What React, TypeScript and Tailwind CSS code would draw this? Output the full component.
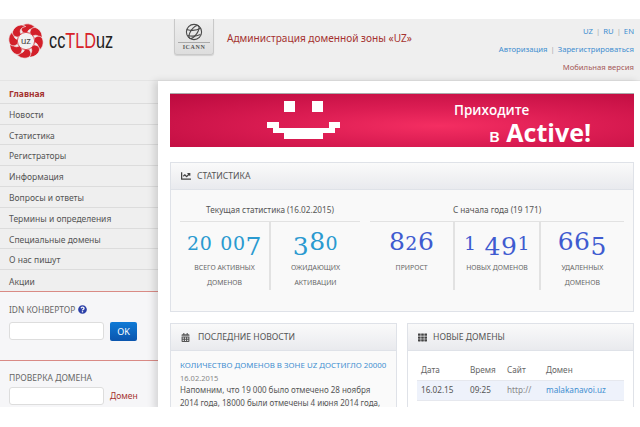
import { FaCalendarAlt, FaChartLine, FaQuestionCircle, FaTh } from 'react-icons/fa';

const menu = [
  'Главная',
  'Новости',
  'Статистика',
  'Регистраторы',
  'Информация',
  'Вопросы и ответы',
  'Термины и определения',
  'Специальные домены',
  'О нас пишут',
  'Акции',
];

// the numbers on the page are old-style figures, no installed font has them
const Figures = ({ value, color }: { value: string; color: string }) => (
  <div className={`mt-[5px] h-[30px] flex items-baseline justify-center tracking-[0.5px] font-['DejaVu_Serif',serif] ${color}`}>
    {value.split('').map((ch, i) => {
      if (ch === ' ') return <span key={i} className="w-[8px]">&nbsp;</span>;
      if ('012'.includes(ch)) return <span key={i} className="text-[19px] leading-[30px]">{ch}</span>;
      if ('68'.includes(ch)) return <span key={i} className="text-[25px] leading-[30px]">{ch}</span>;
      return <span key={i} className="text-[25px] leading-[30px] relative top-[5px]">{ch}</span>;
    })}
  </div>
);

const Stat = ({ value, color, label, border }: { value: string; color: string; label: string[]; border?: boolean }) => (
  <div className={`h-[68px] flex-1 ${border ? 'border-l-2 border-[#e2e2e2]' : ''}`}>
    <Figures value={value} color={color} />
    <div className="mt-[3px] text-center text-[6.9px] leading-[15px] text-[#666]">
      {label.map((l) => (
        <div key={l}>{l}</div>
      ))}
    </div>
  </div>
);

const Logo = () => (
  <svg width="36" height="36" viewBox="0 0 36 36">
    {[0, 45, 90, 135, 180, 225, 270, 315].map((a) => (
      <path
        key={a}
        d="M15 9.5 C11.5 6 13 1 19 0.8 C24 0.8 27.5 3.5 28 7.5 C24.5 5 20.5 5.5 19.5 9.5 Z"
        fill="#d3202a"
        stroke="#f0f0f0"
        strokeWidth="0.7"
        transform={`rotate(${a} 18 18)`}
      />
    ))}
    <circle cx="18" cy="18" r="8.6" fill="#f2f2f2" stroke="#d3202a" strokeWidth="0.8" />
    <text x="18" y="21" textAnchor="middle" fontSize="9.5" fontFamily="Liberation Sans, sans-serif" fill="#444">
      uz
    </text>
  </svg>
);

const Icann = () => (
  <div className="w-[40px] h-[36px] rounded-b-[3px] border border-t-0 border-[#c9c9c9] bg-gradient-to-b from-[#eeeeee] to-[#dedede] flex flex-col items-center shadow-[0_1px_1px_rgba(0,0,0,0.12)]">
    <svg width="18" height="18" viewBox="0 0 18 18" className="mt-[4px]" fill="none" stroke="#4a4a4a" strokeWidth="1.1">
      <circle cx="9" cy="9" r="7.6" />
      <ellipse cx="9" cy="9" rx="3.2" ry="7.6" transform="rotate(35 9 9)" />
      <path d="M1.8 6.5 C7 8 12 7.5 16 5" />
      <path d="M2.5 12.5 C7 13.5 12 13 15.5 11.5" />
    </svg>
    <div className="mt-[1px] w-[32px] h-px bg-[#aaa]" />
    <div className="mt-[1px] text-[6px] leading-[7px] font-bold tracking-[0.6px] text-[#555] font-['Liberation_Serif',serif]">ICANN</div>
  </div>
);

const Smile = () => (
  <svg width="73" height="39" viewBox="0 0 73 39" fill="#fff" className="shrink-0">
    <rect x="17" y="0" width="11" height="11" />
    <rect x="45" y="0" width="11" height="11" />
    <rect x="0" y="21" width="12" height="6" />
    <rect x="62" y="21" width="11" height="6" />
    <rect x="6" y="27" width="62" height="5" />
    <rect x="17" y="32" width="39" height="6" />
  </svg>
);

const CardHead = ({ icon, title }: { icon: React.ReactNode; title: string }) => (
  <div className="h-[27px] flex items-center gap-[6px] px-[10px] border-b border-[#dfe2e8] bg-gradient-to-b from-[#fafafa] to-[#e9eaee] text-[8.6px] text-[#555] uppercase">
    {icon}
    <span>{title}</span>
  </div>
);

export default function App() {
  return (
    <div className="w-[640px] h-[427px] overflow-hidden bg-white pt-[19px] font-['Noto_Sans',sans-serif]">
      <div className="h-[388px] overflow-hidden bg-[#efefef]">
        {/* header */}
        <div className="h-[62px] flex items-start border-b border-[#e4e4e4]">
          <div className="w-[174px] flex items-center pl-[8px] pt-[4px]">
            <Logo />
            <div className="ml-[5px] text-[22px] leading-[36px] origin-left scale-x-[0.74] whitespace-nowrap font-['Liberation_Sans',sans-serif] text-[#222]">
              cc<span className="text-[#d8222a]">TLD</span>uz
            </div>
          </div>
          <Icann />
          <div className="ml-[13px] mt-[12px] text-[10.1px] leading-[15px] text-[#a5322f] whitespace-nowrap">
            Администрация доменной зоны «UZ»
          </div>
          <div className="ml-auto pr-[6px] pt-[3px] text-[7.7px] leading-[18px] text-right text-[#3e8ed0] whitespace-nowrap">
            <div>
              UZ <span className="mx-[1px] text-[#aaa]">|</span> RU <span className="mx-[1px] text-[#aaa]">|</span> EN
            </div>
            <div>
              Авторизация <span className="mx-[1px] text-[#aaa]">|</span> Зарегистрироваться
            </div>
            <div className="text-[#a55a5a]">Мобильная версия</div>
          </div>
        </div>

        <div className="flex">
          {/* sidebar */}
          <div className="w-[158px] shrink-0">
            <ul className="border-b border-[#d98a85] pt-[2px]">
              {menu.map((m, i) => (
                <li
                  key={m}
                  className={`h-[20.8px] flex items-center pl-[9px] pt-[3px] text-[8.5px] border-b border-[#dcdcdc] last:border-b-0 ${
                    i === 0 ? 'font-bold text-[#a5322f]' : 'text-[#555]'
                  }`}
                >
                  {m}
                </li>
              ))}
            </ul>
            <div className="h-[69px] bg-[#f6f6f8] border-b border-[#d98a85] pl-[9px] pt-[12px]">
              <div className="flex items-center gap-[3px] text-[8.4px] leading-[12px] text-[#666]">
                IDN КОНВЕРТОР <FaQuestionCircle className="text-[#2b3fa8] text-[9px]" />
              </div>
              <div className="mt-[6px] flex items-center gap-[6px]">
                <div className="w-[95px] h-[18px] bg-white border border-[#ddd] rounded-[3px]" />
                <div className="w-[27px] h-[19px] rounded-[2px] bg-gradient-to-b from-[#0f7ad6] to-[#0b55ae] text-white text-[9px] flex items-center justify-center">
                  OK
                </div>
              </div>
            </div>
            <div className="h-[60px] bg-[#f6f6f8] pl-[9px] pt-[11px]">
              <div className="text-[8.5px] leading-[12px] text-[#666]">ПРОВЕРКА ДОМЕНА</div>
              <div className="mt-[3px] flex items-center gap-[6px]">
                <div className="w-[95px] h-[18px] bg-white border border-[#ddd] rounded-[3px]" />
                <span className="text-[8.5px] text-[#a5322f]">Домен</span>
              </div>
            </div>
          </div>

          {/* main */}
          <div className="flex-1 h-[330px] bg-white pl-[12px] pr-[6px] pt-[12px] shadow-[-4px_0_7px_rgba(0,0,0,0.13)]">
            <div className="h-[54px] border-t border-[#aaa] flex items-start pl-[97px] pt-[7px] bg-[radial-gradient(ellipse_at_58%_60%,#f42e62_0%,#dc1d53_40%,#bb0a3e_100%)]">
              <Smile />
              <div className="ml-[114px] text-white font-['Open_Sans',sans-serif] whitespace-nowrap">
                <div className="-mt-[1px] text-[13.5px] leading-[20px] font-semibold">Приходите</div>
                <div className="ml-[35px] -mt-[2px] text-[25px] leading-[28px] font-bold">
                  <span className="text-[18px] font-semibold">в</span> Active!
                </div>
              </div>
            </div>

            <div className="mt-[15px] h-[150px] border border-[#dfe2e8] bg-[#f9f9f9]">
              <CardHead icon={<FaChartLine className="text-[#444] text-[10px]" />} title="Статистика" />
              <div className="flex px-[9px] pt-[13px] gap-[10px]">
                <div className="w-[180px]">
                  <div className="h-[19px] border-b border-[#e2e2e2] text-center text-[8.2px] leading-[13px] text-[#555]">
                    Текущая статистика (16.02.2015)
                  </div>
                  <div className="flex">
                    <Stat value="20 007" color="text-[#2a9ad0]" label={['ВСЕГО АКТИВНЫХ', 'ДОМЕНОВ']} />
                    <Stat value="380" color="text-[#2a9ad0]" label={['ОЖИДАЮЩИХ', 'АКТИВАЦИИ']} border />
                  </div>
                </div>
                <div className="flex-1">
                  <div className="h-[19px] border-b border-[#e2e2e2] text-center text-[8.2px] leading-[13px] text-[#555]">
                    С начала года (19 171)
                  </div>
                  <div className="flex">
                    <Stat value="826" color="text-[#3f5bd0]" label={['ПРИРОСТ']} />
                    <Stat value="1 491" color="text-[#3f5bd0]" label={['НОВЫХ ДОМЕНОВ']} border />
                    <Stat value="665" color="text-[#3f5bd0]" label={['УДАЛЕННЫХ', 'ДОМЕНОВ']} border />
                  </div>
                </div>
              </div>
            </div>

            <div className="mt-[11px] flex gap-[10px]">
              <div className="w-[227px] h-[90px] border border-[#dfe2e8] bg-[#fafafa] overflow-hidden">
                <CardHead icon={<FaCalendarAlt className="text-[#555] text-[9px] mr-[2px]" />} title="Последние новости" />
                <div className="px-[9px] pt-[8px]">
                  <div className="text-[7.9px] leading-[13px] text-[#3e8ed0] whitespace-nowrap">КОЛИЧЕСТВО ДОМЕНОВ В ЗОНЕ UZ ДОСТИГЛО 20000</div>
                  <div className="text-[7.5px] leading-[12px] text-[#888]">16.02.2015</div>
                  <div className="text-[8px] leading-[12.5px] text-[#555] whitespace-nowrap">
                    <div>Напомним, что 19 000 было отмечено 28 ноября</div>
                    <div>2014 года, 18000 были отмечены 4 июня 2014 года,</div>
                  </div>
                </div>
              </div>
              <div className="w-[227px] h-[90px] border border-[#dfe2e8] bg-white overflow-hidden">
                <CardHead icon={<FaTh className="text-[#444] text-[9px]" />} title="Новые домены" />
                <table className="ml-[9px] mt-[9px] w-[207px] text-[8.2px] text-[#555] table-fixed">
                  <tbody>
                    <tr className="h-[20px] text-[#666]">
                      <td className="w-[53px] pl-[4px]">Дата</td>
                      <td className="w-[37px]">Время</td>
                      <td className="w-[39px]">Сайт</td>
                      <td>Домен</td>
                    </tr>
                    <tr className="h-[20px] bg-[#eef2fb] border-y border-[#e6e8ee]">
                      <td className="pl-[4px]">16.02.15</td>
                      <td>09:25</td>
                      <td className="text-[#888]">http://</td>
                      <td className="text-[#3e8ed0]">malakanavoi.uz</td>
                    </tr>
                  </tbody>
                </table>
              </div>
            </div>
          </div>
        </div>
      </div>
    </div>
  );
}
